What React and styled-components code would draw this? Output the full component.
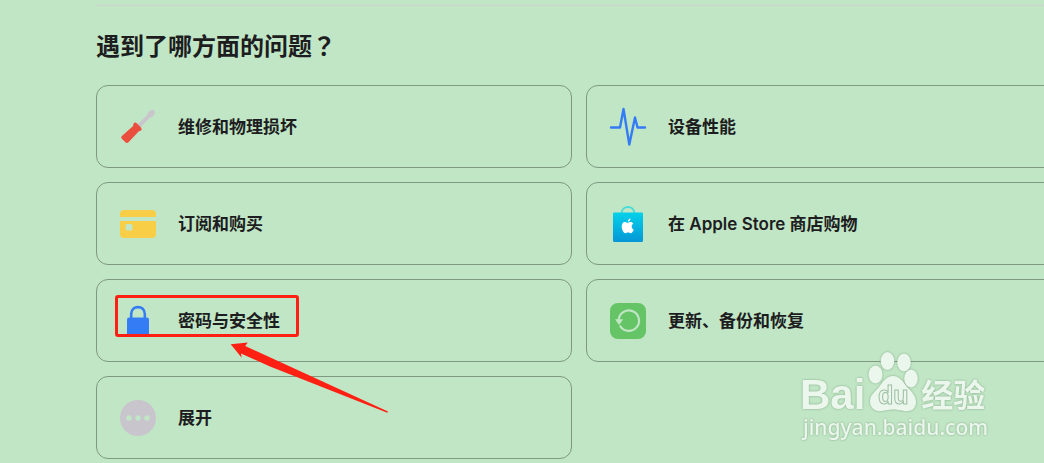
import React from "react";
import styled, { createGlobalStyle } from "styled-components";

const GlobalStyle = createGlobalStyle`
  *, *::before, *::after { box-sizing: border-box; }
  body {
    margin: 0;
    background: #c1e6c5;
    color: #1d1d1f;
    font-family: Inter, "Noto Sans CJK SC", sans-serif;
  }
`;

const Page = styled.main`
  position: relative;
  min-height: 100vh;
  padding: 5px 0 4px 96px;
  overflow: hidden;
`;

const Section = styled.section`
  margin-right: -18px;
  border-top: 1px solid #cdd4cf;
  padding-top: 23px;
`;

const Heading = styled.h2`
  margin: 0 0 24px;
  font-family: "Noto Sans CJK SC", sans-serif;
  font-size: 24px;
  font-weight: 700;
  line-height: 32px;
`;

const CenteredMark = styled.span`
  font-family: "Noto Sans CJK TC", sans-serif;
`;

const TopicGrid = styled.ul`
  display: grid;
  grid-template-columns: repeat(2, minmax(0, 1fr));
  gap: 14px;
  margin: 0;
  padding: 0;
  list-style: none;
`;

const TopicItem = styled.li`
  position: relative;
`;

const TopicLink = styled.a`
  display: flex;
  align-items: center;
  gap: 22px;
  min-height: 83px;
  padding: 0 23px;
  border: 1px solid #7e9881;
  border-radius: 12px;
  color: inherit;
  font-size: 17px;
  font-weight: 600;
  line-height: 24px;
  text-decoration: none;
`;

const Icon = styled.svg`
  flex: none;
  display: block;
  width: 36px;
  height: 36px;
  overflow: visible;
`;

const Highlight = styled.span`
  position: absolute;
  top: 16px;
  left: 19px;
  width: 184px;
  height: 42px;
  border: 3px solid #ff2014;
  border-radius: 3px;
  pointer-events: none;
`;

const Arrow = styled.svg`
  position: absolute;
  z-index: 1;
  top: 62px;
  left: 134px;
  width: 160px;
  height: 74px;
  pointer-events: none;
`;

const Watermark = styled.div`
  position: absolute;
  right: 54px;
  bottom: 22px;
  width: 190px;
  color: #ebf6ec;
  filter: drop-shadow(0 0 1px rgba(80, 120, 85, 0.55));
  pointer-events: none;
`;

const WatermarkBrand = styled.div`
  display: flex;
  align-items: flex-end;
  gap: 3px;
`;

const BrandLatin = styled.span`
  font-family: "Liberation Sans", sans-serif;
  font-size: 42px;
  font-weight: 700;
  line-height: 36px;
`;

const BrandHan = styled.span`
  font-family: "Noto Sans CJK SC", sans-serif;
  font-size: 32px;
  font-weight: 700;
  line-height: 40px;
`;

const Paw = styled.svg`
  flex: none;
  display: block;
  width: 50px;
  height: 62px;
`;

const WatermarkSite = styled.div`
  padding-left: 3px;
  font-family: "Noto Sans", sans-serif;
  font-size: 21px;
  font-weight: 500;
  line-height: 28px;
`;

const Screwdriver = () => (
  <Icon viewBox="0 0 36 36" aria-hidden="true">
    <path d="M17.500 16 27.300 6.500Q27.800 3.500 30 2.200L33 1.200 34.600 2.900 33.500 6Q32.200 8.200 29.300 8.600L20 18.200Z" fill="#c9c5cd" stroke="#c9c5cd" strokeLinejoin="round" />
    <path d="M13.500 14.600Q15.200 12.600 17 14.400L21 18.400Q22.600 20.200 20.800 21.700L18.800 22.200 8.500 33.200Q7.200 34.600 5.700 33.400L1.800 29.700Q.5 28.300 1.900 26.900L13.100 16.900Z" fill="#ea4f3d" />
  </Icon>
);

const Pulse = () => (
  <Icon viewBox="0 0 36 36" aria-hidden="true">
    <path d="M1 18.500H10L13.500 0 19.300 35.500 25 8.500 27.500 18.500H35" fill="none" stroke="#347cf6" strokeWidth="2.400" strokeLinecap="round" strokeLinejoin="round" />
  </Icon>
);

const Card = () => (
  <Icon viewBox="0 0 36 36" aria-hidden="true">
    <path d="M4 4H32Q36 4 36 8V11H0V8Q0 4 4 4Z" fill="#f8ce47" />
    <path fillRule="evenodd" d="M0 15H36V28Q36 32 32 32H4Q0 32 0 28ZM7 18Q5.500 18 5.500 19.500V23Q5.500 24.500 7 24.500H11Q12.500 24.500 12.500 23V19.500Q12.500 18 11 18Z" fill="#f8ce47" />
  </Icon>
);

const StoreBag = () => (
  <Icon viewBox="0 0 36 36" aria-hidden="true">
    <defs>
      <linearGradient id="bag" x1="0" y1="0" x2="0" y2="1">
        <stop offset="0" stopColor="#04d1ea" />
        <stop offset="1" stopColor="#0597d6" />
      </linearGradient>
    </defs>
    <path d="M11.500 7C12.500 -1 23.500 -1 24.500 7" fill="none" stroke="#45dcd8" strokeWidth="1.800" />
    <path d="M3 7.500Q3 6.500 4 6.500H32Q33 6.500 33 7.500V34.500Q33 36 31.500 36H4.500Q3 36 3 34.500Z" fill="url(#bag)" />
    <g fill="#fff">
      <path d="M18 16.700C16.900 16.700 16.200 15.900 14.900 15.900C13 15.900 11.700 17.700 11.700 20.500C11.700 23.900 13.800 27.200 15.500 27.200C16.500 27.200 16.900 26.600 18.100 26.600C19.300 26.600 19.700 27.200 20.700 27.200C22 27.200 23.200 25.200 23.700 23.700C21.200 22.600 21 19.100 23.300 17.600C22.600 16.500 21.700 16 20.600 16C19.400 16 18.800 16.700 18 16.700Z" />
      <path d="M17.900 15.700C17.700 14 19.100 12.500 20.500 12.300C20.700 14.100 19.300 15.600 17.900 15.700Z" />
    </g>
  </Icon>
);

const Lock = () => (
  <Icon viewBox="0 0 36 36" aria-hidden="true">
    <path d="M11.200 15V11C11.200 1.800 24.800 1.800 24.800 11V15" fill="none" stroke="#347cf6" strokeWidth="2.600" />
    <rect x="7" y="14.500" width="22" height="19" rx="2" fill="#347cf6" />
  </Icon>
);

const Restore = () => (
  <Icon viewBox="0 0 36 36" aria-hidden="true">
    <rect width="36" height="36" rx="8" fill="#65c466" />
    <path d="M8.700 16.500A10.200 10.200 0 1 1 10.400 23.400" fill="none" stroke="#c1e6c5" strokeWidth="2.200" strokeLinecap="round" />
    <path d="M5 16.300H13.200L9.100 22Z" fill="#c1e6c5" />
  </Icon>
);

const More = () => (
  <Icon viewBox="0 0 36 36" aria-hidden="true">
    <circle cx="18" cy="18" r="18" fill="#c8c5cc" />
    <g fill="#c1e6c5">
      <circle cx="9" cy="18" r="2.700" />
      <circle cx="18" cy="18" r="2.700" />
      <circle cx="27" cy="18" r="2.700" />
    </g>
  </Icon>
);

const topics = [
  { label: "维修和物理损坏", icon: Screwdriver },
  { label: "设备性能", icon: Pulse },
  { label: "订阅和购买", icon: Card },
  { label: "在 Apple Store 商店购物", icon: StoreBag },
  { label: "密码与安全性", icon: Lock, marked: true },
  { label: "更新、备份和恢复", icon: Restore },
  { label: "展开", icon: More },
];

export default function App() {
  return (
    <>
      <GlobalStyle />
      <Page lang="zh-CN">
        <Section>
          <Heading>
            遇到了哪方面的问题<CenteredMark lang="zh-TW">？</CenteredMark>
          </Heading>
          <TopicGrid>
            {topics.map(({ label, icon: TopicIcon, marked }) => (
              <TopicItem key={label}>
                <TopicLink href="#">
                  <TopicIcon />
                  <span>{label}</span>
                </TopicLink>
                {marked && (
                  <>
                    <Highlight />
                    <Arrow viewBox="0 0 160 74" aria-hidden="true">
                      <path d="M.7 3.300 17.800 1.600 15.200 5 158 70.500 157.300 71.700 40 25.500 11 12.500 11.700 16.700Z" fill="#ff2014" />
                    </Arrow>
                  </>
                )}
              </TopicItem>
            ))}
          </TopicGrid>
        </Section>
        <Watermark>
          <WatermarkBrand>
            <BrandLatin>Bai</BrandLatin>
            <Paw viewBox="0 0 50 62" fill="currentColor">
              <ellipse cx="7.500" cy="23.500" rx="7" ry="9" />
              <ellipse cx="19.500" cy="10" rx="6.800" ry="9" />
              <ellipse cx="36" cy="11.500" rx="6.800" ry="9" />
              <ellipse cx="43" cy="27.500" rx="6.800" ry="9" />
              <path d="M25 25C32 25 35 31 39 36C44 41 48 45 48 51C48 58 43 61 36 60C28 58 21 58 14 60C7 61 2 57 2 50C2 44 7 41 11 36C15 31 18 25 25 25Z" />
              <text x="10" y="53" stroke="#9fc0a4" strokeWidth="1" fontFamily="Liberation Sans" fontWeight="700" fontSize="25">du</text>
            </Paw>
            <BrandHan>经验</BrandHan>
          </WatermarkBrand>
          <WatermarkSite>jingyan.baidu.com</WatermarkSite>
        </Watermark>
      </Page>
    </>
  );
}
